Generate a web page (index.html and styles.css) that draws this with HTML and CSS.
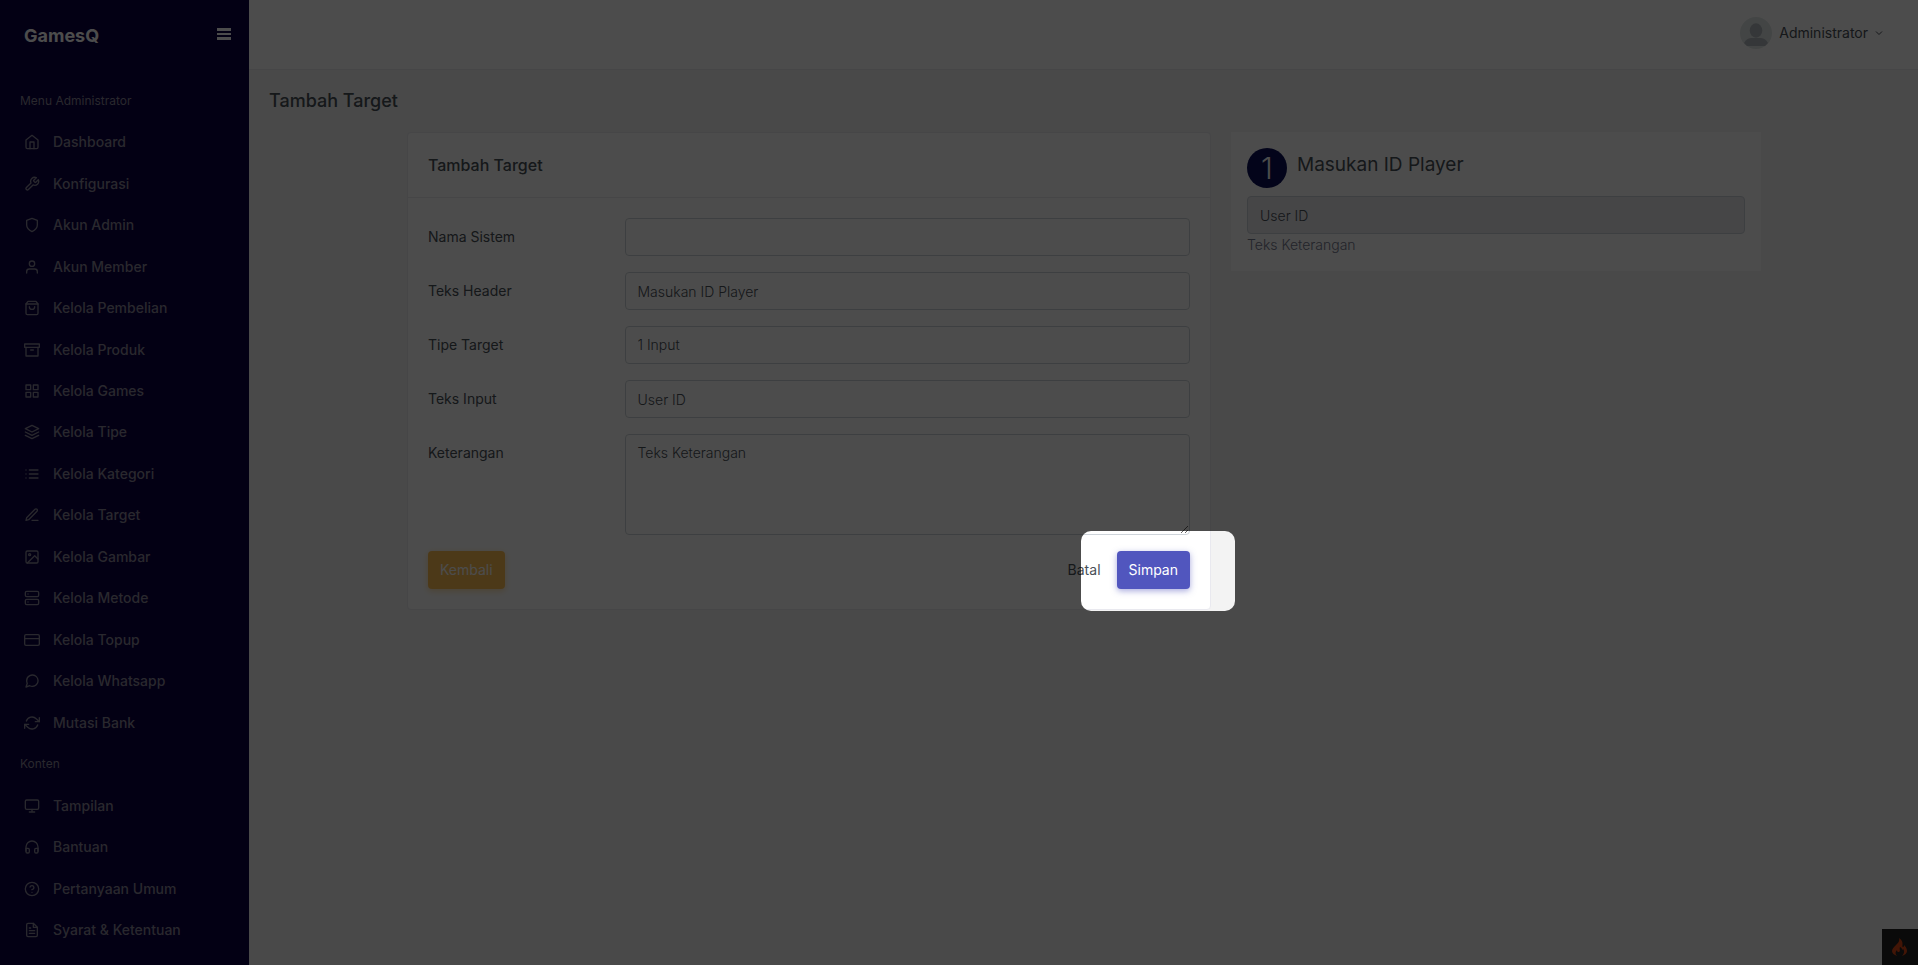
FILE: index.html
```html
<!DOCTYPE html>
<html lang="id">
<head>
  <meta charset="UTF-8" />
  <meta name="viewport" content="width=device-width, initial-scale=1.0"/>
  <title>Tambah Target - GamesQ</title>
  <link rel="stylesheet" href="styles.css">
</head>
<body>

  <div class="layout">
    <!-- Sidebar -->
    <aside class="sidebar">
      <div class="brand">
        <a href="#" class="brand-name">GamesQ</a>
        <button type="button" class="menu-toggle" aria-label="Menu"><span></span><span></span><span></span></button>
      </div>

      <nav class="menu">
        <p class="menu-title">Menu Administrator</p>
        <a href="#"><svg viewBox="0 0 24 24"><path d="M3 9l9-7 9 7v11a2 2 0 0 1-2 2H5a2 2 0 0 1-2-2z"/><path d="M9 22V12h6v10"/></svg>Dashboard</a>
        <a href="#"><svg viewBox="0 0 24 24"><path d="M14.7 6.3a1 1 0 0 0 0 1.4l1.6 1.6a1 1 0 0 0 1.4 0l3.77-3.77a6 6 0 0 1-7.94 7.94l-6.91 6.91a2.12 2.12 0 0 1-3-3l6.91-6.91a6 6 0 0 1 7.94-7.94l-3.76 3.76z"/></svg>Konfigurasi</a>
        <a href="#"><svg viewBox="0 0 24 24"><path d="M12 22s8-4 8-10V5l-8-3-8 3v7c0 6 8 10 8 10z"/></svg>Akun Admin</a>
        <a href="#"><svg viewBox="0 0 24 24"><path d="M20 21v-2a4 4 0 0 0-4-4H8a4 4 0 0 0-4 4v2"/><circle cx="12" cy="7" r="4"/></svg>Akun Member</a>
        <a href="#"><svg viewBox="0 0 24 24"><path d="M6 2L3 6v14a2 2 0 0 0 2 2h14a2 2 0 0 0 2-2V6l-3-4z"/><path d="M3 6h18"/><path d="M16 10a4 4 0 0 1-8 0"/></svg>Kelola Pembelian</a>
        <a href="#"><svg viewBox="0 0 24 24"><path d="M21 8v13H3V8"/><path d="M1 3h22v5H1z"/><path d="M10 12h4"/></svg>Kelola Produk</a>
        <a href="#"><svg viewBox="0 0 24 24"><path d="M3 3h7v7H3zM14 3h7v7h-7zM14 14h7v7h-7zM3 14h7v7H3z"/></svg>Kelola Games</a>
        <a href="#"><svg viewBox="0 0 24 24"><path d="M12 2L2 7l10 5 10-5-10-5z"/><path d="M2 17l10 5 10-5"/><path d="M2 12l10 5 10-5"/></svg>Kelola Tipe</a>
        <a href="#"><svg viewBox="0 0 24 24"><path d="M8 6h13M8 12h13M8 18h13M3 6h.01M3 12h.01M3 18h.01"/></svg>Kelola Kategori</a>
        <a href="#"><svg viewBox="0 0 24 24"><path d="M12 20h9"/><path d="M16.5 3.5a2.121 2.121 0 0 1 3 3L7 19l-4 1 1-4L16.5 3.5z"/></svg>Kelola Target</a>
        <a href="#"><svg viewBox="0 0 24 24"><rect x="3" y="3" width="18" height="18" rx="2"/><circle cx="8.5" cy="8.5" r="1.5"/><path d="M21 15l-5-5L5 21"/></svg>Kelola Gambar</a>
        <a href="#"><svg viewBox="0 0 24 24"><rect x="2" y="2" width="20" height="8" rx="2"/><rect x="2" y="14" width="20" height="8" rx="2"/><path d="M6 6h.01M6 18h.01"/></svg>Kelola Metode</a>
        <a href="#"><svg viewBox="0 0 24 24"><rect x="1" y="4" width="22" height="16" rx="2"/><path d="M1 10h22"/></svg>Kelola Topup</a>
        <a href="#"><svg viewBox="0 0 24 24"><path d="M21 11.5a8.38 8.38 0 0 1-.9 3.8 8.5 8.5 0 0 1-7.6 4.7 8.38 8.38 0 0 1-3.8-.9L3 21l1.9-5.7a8.38 8.38 0 0 1-.9-3.8 8.5 8.5 0 0 1 4.7-7.6 8.38 8.38 0 0 1 3.8-.9h.5a8.48 8.48 0 0 1 8 8v.5z"/></svg>Kelola Whatsapp</a>
        <a href="#"><svg viewBox="0 0 24 24"><path d="M23 4v6h-6M1 20v-6h6"/><path d="M3.51 9a9 9 0 0 1 14.85-3.36L23 10M1 14l4.64 4.36A9 9 0 0 0 20.49 15"/></svg>Mutasi Bank</a>
        <p class="menu-title">Konten</p>
        <a href="#"><svg viewBox="0 0 24 24"><rect x="2" y="3" width="20" height="14" rx="2"/><path d="M8 21h8M12 17v4"/></svg>Tampilan</a>
        <a href="#"><svg viewBox="0 0 24 24"><path d="M3 18v-6a9 9 0 0 1 18 0v6"/><path d="M21 19a2 2 0 0 1-2 2h-1a2 2 0 0 1-2-2v-3a2 2 0 0 1 2-2h3zM3 19a2 2 0 0 0 2 2h1a2 2 0 0 0 2-2v-3a2 2 0 0 0-2-2H3z"/></svg>Bantuan</a>
        <a href="#"><svg viewBox="0 0 24 24"><circle cx="12" cy="12" r="10"/><path d="M9.09 9a3 3 0 0 1 5.83 1c0 2-3 3-3 3M12 17h.01"/></svg>Pertanyaan Umum</a>
        <a href="#"><svg viewBox="0 0 24 24"><path d="M14 2H6a2 2 0 0 0-2 2v16a2 2 0 0 0 2 2h12a2 2 0 0 0 2-2V8z"/><path d="M14 2v6h6M16 13H8M16 17H8M10 9H8"/></svg>Syarat &amp; Ketentuan</a>
      </nav>
    </aside>

    <div class="main">
      <header class="topbar">
        <button type="button" class="user">
          <svg class="avatar" viewBox="0 0 32 32"><circle cx="16" cy="16" r="16" fill="#e1e8e7"/><ellipse cx="16" cy="13.500" rx="6.300" ry="7.200" fill="#b3b9bf"/><path d="M4 26c2-4 5-5 8-5h8c3 0 6 1 8 5l-3 3H7z" fill="#b3b9bf"/></svg>
          Administrator
          <svg class="chevron" viewBox="0 0 8 8"><path d="M1 2.500l3 3 3-3"/></svg>
        </button>
      </header>

      <main class="content">
        <h1 class="page-title">Tambah Target</h1>

        <div class="row">
          <!-- Form -->
          <div class="col-form">
            <form class="card">
              <h2 class="card-header">Tambah Target</h2>
              <div class="card-body">
                <div class="form-row">
                  <label for="nama">Nama Sistem</label>
                  <div class="field"><input type="text" id="nama"></div>
                </div>
                <div class="form-row">
                  <label for="header">Teks Header</label>
                  <div class="field"><input type="text" id="header" value="Masukan ID Player"></div>
                </div>
                <div class="form-row">
                  <label for="tipe">Tipe Target</label>
                  <div class="field">
                    <select id="tipe">
                      <option>1 Input</option>
                      <option>2 Input</option>
                    </select>
                  </div>
                </div>
                <div class="form-row">
                  <label for="input">Teks Input</label>
                  <div class="field"><input type="text" id="input" value="User ID"></div>
                </div>
                <div class="form-row">
                  <label for="keterangan">Keterangan</label>
                  <div class="field"><textarea id="keterangan">Teks Keterangan</textarea></div>
                </div>
                <div class="actions">
                  <button type="button" class="btn btn-warning">Kembali</button>
                  <div class="actions-right">
                    <button type="reset" class="btn">Batal</button>
                    <div class="tour-step">
                      <button type="submit" class="btn btn-primary">Simpan</button>
                      <div class="spotlight"></div>
                    </div>
                  </div>
                </div>
              </div>
            </form>
          </div>

          <!-- Preview -->
          <div class="col-preview">
            <section class="preview">
              <div class="preview-head">
                <span class="step">1</span>
                <label for="preview-id">Masukan ID Player</label>
              </div>
              <input type="text" id="preview-id" value="User ID" disabled>
              <p class="help">Teks Keterangan</p>
            </section>
          </div>
        </div>
      </main>
    </div>
  </div>

  <button type="button" class="debug" aria-label="Debug">
    <svg viewBox="0 0 16 18"><path d="M7 0c1 3-1 5-3 7-2 2-4 4-4 6 0 2 2 4 5 5-2-2-2-4 0-6 0 2 1 2 2 2 2-1 0-3 1-5 2 1 2 2 2 3l1-1c2 2 1 5-1 7 3-1 5-3 5-5 0-3-2-5-3-6 0 1 0 2-1 2C9 9 13 4 7 0z"/></svg>
  </button>

</body>
</html>
```
FILE: styles.css
```css
* {
  box-sizing: border-box;
}

body {
  margin: 0;
  font-family: Inter, "Liberation Sans", sans-serif;
  font-size: 14px;
  line-height: 20px;
  background: #f3f3f3;
  color: #495057;
  overflow: hidden;
}

h1, h2, p {
  margin: 0;
  font-weight: 500;
}

a {
  color: inherit;
  text-decoration: none;
}

button, input, select, textarea {
  font: inherit;
  color: inherit;
}

button {
  border: 0;
  background: none;
  cursor: pointer;
}

.layout {
  display: flex;
  min-height: 100vh;
}

/* Sidebar */
.sidebar {
  width: 249px;
  flex-shrink: 0;
  display: flex;
  flex-direction: column;
  padding-bottom: 14px;
  background: #0a0043;
  color: #8a8799;
}

.brand {
  display: flex;
  justify-content: space-between;
  height: 80px;
  padding: 24px 18px 0 24px;
  color: #fff;
}

.brand-name {
  font-size: 18px;
  font-weight: 700;
  line-height: 24px;
}

.menu-toggle {
  display: flex;
  flex-direction: column;
  gap: 2px;
  height: 20px;
  padding: 4px 0;
}

.menu-toggle span {
  width: 14px;
  height: 3px;
  background: #fff;
}

.menu {
  flex: 1;
  display: flex;
  flex-direction: column;
}

.menu a, .menu-title {
  flex: 1;
  display: flex;
  align-items: center;
}

.menu a {
  gap: 13px;
  padding: 0 24px;
  font-weight: 500;
}

.menu-title {
  padding: 0 20px;
  font-size: 12px;
  font-weight: 400;
}

.menu svg {
  width: 16px;
  height: 16px;
  fill: none;
  stroke: currentColor;
  stroke-width: 2;
  stroke-linecap: round;
  stroke-linejoin: round;
}

/* Top bar */
.main {
  flex: 1;
}

.topbar {
  display: flex;
  justify-content: flex-end;
  height: 70px;
  padding: 0 35px 3px;
  background: #fff;
  border-bottom: 1px solid #e9e9ef;
}

.user {
  display: flex;
  align-items: center;
  gap: 7px;
  padding: 0;
}

.avatar {
  width: 32px;
  height: 32px;
}

.chevron {
  width: 8px;
  height: 8px;
  fill: none;
  stroke: currentColor;
}

/* Content */
.content {
  padding: 20px 17px 20px 20px;
}

.page-title {
  margin-bottom: 20px;
  font-size: 18px;
  line-height: 22px;
}

.row {
  display: flex;
  justify-content: center;
  align-items: flex-start;
  margin: 0 -12px;
}

.col-form {
  width: 50%;
  padding: 0 12px;
}

.col-preview {
  width: 33.3333%;
  padding: 0 14px 0 8px;
}

.card {
  background: #fff;
  border: 1px solid #e9e9ef;
  border-radius: 4px;
}

.card-header {
  padding: 20px;
  font-size: 16px;
  line-height: 24px;
  border-bottom: 1px solid #e9e9ef;
}

.card-body {
  padding: 20px;
}

.form-row {
  display: flex;
  margin: 0 -12px 16px;
}

.form-row label {
  width: 25%;
  padding: 9px 12px;
}

.field {
  width: 75%;
  padding: 0 12px;
}

input, select, textarea {
  display: block;
  width: 100%;
  height: 38px;
  padding: 8px 12px;
  font-weight: 300;
  background: #fff;
  border: 1px solid #ced4da;
  border-radius: 4px;
  appearance: none;
}

textarea {
  height: 101px;
  resize: vertical;
}

.actions, .actions-right {
  display: flex;
  justify-content: space-between;
}

.actions-right {
  gap: 4px;
}

.btn {
  height: 38px;
  padding: 0 12px;
  border-radius: 4px;
}

.btn-warning {
  background: #ffbf53;
  color: #fff;
  box-shadow: 0 2px 6px rgba(255, 191, 83, 0.5);
}

.btn-primary {
  background: #5156be;
  color: #fff;
  box-shadow: 0 2px 6px rgba(81, 86, 190, 0.5);
}

/* Tour highlight, its shadow dims the rest of the page */
.tour-step {
  position: relative;
}

.spotlight {
  position: absolute;
  top: -20px;
  right: -45px;
  bottom: -22px;
  left: -36px;
  z-index: 10;
  border-radius: 10px;
  box-shadow: 0 0 0 3000px rgba(0, 0, 0, 0.7);
  pointer-events: none;
}

/* Preview */
.preview {
  padding: 16px;
  background: #fff;
}

.preview-head {
  display: flex;
  gap: 10px;
  margin-bottom: 8px;
  font-size: 19px;
  line-height: 34px;
}

.step {
  width: 40px;
  height: 40px;
  border-radius: 50%;
  background: #0a1058;
  color: #fff;
  font-size: 30px;
  font-weight: 300;
  line-height: 40px;
  text-align: center;
}

.preview input {
  background: #e9e9ef;
}

.help {
  padding-top: 1px;
  color: #74788d;
  font-weight: 300;
}

.debug {
  position: fixed;
  right: 0;
  bottom: 0;
  display: flex;
  align-items: center;
  justify-content: center;
  width: 36px;
  height: 36px;
  padding: 0;
  background: #222;
}

.debug svg {
  width: 16px;
  height: 20px;
  fill: #dd4814;
}
```
